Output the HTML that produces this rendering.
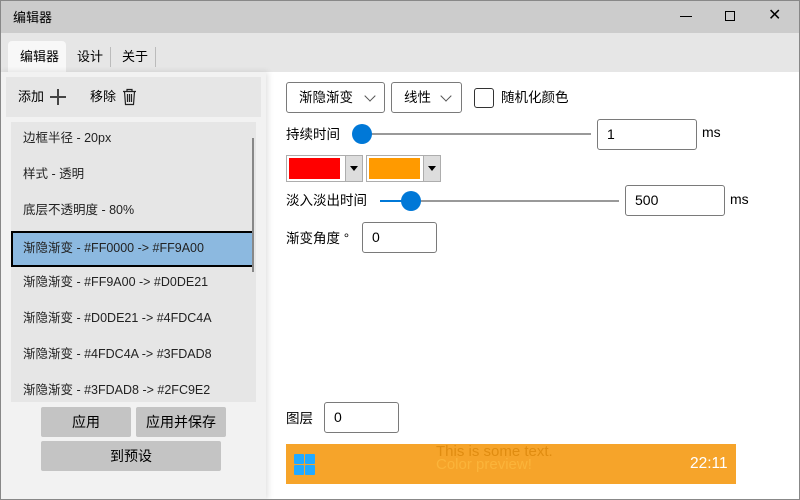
<!DOCTYPE html>
<html><head><meta charset="utf-8"><style>
*{box-sizing:border-box;margin:0;padding:0}
body{width:800px;height:500px;overflow:hidden;position:relative;background:#fff;font-family:"Liberation Sans","Noto Sans CJK SC",sans-serif;font-size:13px;color:#000}
.a{position:absolute}
.tb{border:1px solid #7a7a7a;border-radius:3px;background:#fff;padding-left:9px;font-size:14px;line-height:28px}
.li{position:absolute;left:11px;width:243px;height:36px;padding-left:12px;line-height:36px;font-size:12.5px;color:#222}
.btn{position:absolute;background:#c4c4c4;border-radius:2px;text-align:center;line-height:30px;font-size:14px}
.dd{position:absolute;border:1px solid #7a7a7a;border-radius:3px;background:#fff;top:82px;height:31px;line-height:29px;font-size:13.5px;padding-left:12px}
.chev{position:absolute;top:9px;width:8px;height:8px;border-right:1px solid #555;border-bottom:1px solid #555;transform:rotate(45deg)}
.lab{position:absolute;font-size:13.5px}
.thumb{position:absolute;width:20px;height:20px;border-radius:50%;background:#0078d7}
.track{position:absolute;height:2px;background:#999}
.cp{position:absolute;top:155px;height:27px;border:1px solid #adadad;background:#fff}
.arr{position:absolute;right:0;top:0;width:17px;height:25px;background:#ddd;border-left:1px solid #adadad}
.arr:after{content:"";position:absolute;left:4px;top:10px;border-left:4px solid transparent;border-right:4px solid transparent;border-top:5px solid #000}
</style></head><body>
<div class="a" style="left:0;top:0;width:800px;height:33px;background:#cccccc;border:1px solid #888;border-bottom:none"></div>
<div class="a" style="left:13px;top:7px;font-size:13px">编辑器</div>
<div class="a" style="left:680px;top:16px;width:12px;height:1px;background:#000"></div>
<div class="a" style="left:725px;top:11px;width:10px;height:10px;border:1px solid #000"></div>
<div class="a" style="left:768px;top:7px;font-size:16px;line-height:18px">✕</div>
<div class="a" style="left:0;top:33px;width:800px;height:39px;background:#e6e6e6;border-left:1px solid #888;border-right:1px solid #888"></div>
<div class="a" style="left:8px;top:41px;width:58px;height:31px;background:#f8f8f8;border-radius:4px 4px 0 0"></div>
<div class="a" style="left:20px;top:46px;font-size:13px">编辑器</div>
<div class="a" style="left:77px;top:46px;font-size:13px">设计</div>
<div class="a" style="left:110px;top:47px;width:1px;height:20px;background:#bbb"></div>
<div class="a" style="left:122px;top:46px;font-size:13px">关于</div>
<div class="a" style="left:155px;top:47px;width:1px;height:20px;background:#bbb"></div>
<div class="a" style="left:0;top:72px;width:266px;height:428px;background:#f2f2f2;box-shadow:2px 0 6px rgba(0,0,0,.12);border-left:1px solid #888"></div>
<div class="a" style="left:6px;top:77px;width:255px;height:40px;background:#e6e6e6"></div>
<div class="a" style="left:18px;top:86px;font-size:13px">添加</div>
<div class="a" style="left:50px;top:96px;width:16px;height:1.5px;background:#444"></div>
<div class="a" style="left:57px;top:89px;width:1.5px;height:16px;background:#444"></div>
<div class="a" style="left:90px;top:86px;font-size:13px">移除</div>
<svg class="a" style="left:122px;top:88px" width="15" height="18" viewBox="0 0 15 18"><path d="M1 3.5H14M5 3.5V1.5H10V3.5M2.5 3.5L3.5 16.5H11.5L12.5 3.5M5.5 6V14M7.5 6V14M9.5 6V14" fill="none" stroke="#222" stroke-width="1.2"/></svg>
<div class="a" style="left:11px;top:122px;width:245px;height:280px;background:#e6e6e6"></div>
<div class="li" style="top:120px">边框半径 - 20px</div>
<div class="li" style="top:156px">样式 - 透明</div>
<div class="li" style="top:192px">底层不透明度 - 80%</div>
<div class="li" style="top:231px;height:36px;background:#8cb9e0;border:2px solid #000;padding-left:10px;line-height:30px;left:11px;width:243px">渐隐渐变 - #FF0000 -&gt; #FF9A00</div>
<div class="li" style="top:264px">渐隐渐变 - #FF9A00 -&gt; #D0DE21</div>
<div class="li" style="top:300px">渐隐渐变 - #D0DE21 -&gt; #4FDC4A</div>
<div class="li" style="top:336px">渐隐渐变 - #4FDC4A -&gt; #3FDAD8</div>
<div class="li" style="top:372px;height:30px;overflow:hidden">渐隐渐变 - #3FDAD8 -&gt; #2FC9E2</div>
<div class="a" style="left:252px;top:138px;width:2px;height:134px;background:#888"></div>
<div class="btn" style="left:41px;top:407px;width:90px">应用</div>
<div class="btn" style="left:136px;top:407px;width:90px">应用并保存</div>
<div class="btn" style="left:41px;top:441px;width:180px">到预设</div>
<div class="a" style="left:799px;top:72px;width:1px;height:428px;background:#888"></div>
<div class="a" style="left:0;top:499px;width:800px;height:1px;background:#888"></div>

<div class="dd" style="left:286px;width:99px">渐隐渐变<span class="chev" style="left:79px"></span></div>
<div class="dd" style="left:391px;width:71px">线性<span class="chev" style="left:50px"></span></div>
<div class="a" style="left:474px;top:88px;width:20px;height:20px;border:1px solid #333;border-radius:3px"></div>
<div class="lab" style="left:501px;top:86px">随机化颜色</div>

<div class="lab" style="left:286px;top:123px">持续时间</div>
<div class="track" style="left:362px;top:133px;width:229px"></div>
<div class="thumb" style="left:352px;top:124px"></div>
<div class="tb a" style="left:597px;top:119px;width:100px;height:31px">1</div>
<div class="lab" style="left:702px;top:124px;font-size:14px">ms</div>

<div class="cp" style="left:286px;width:77px"><div class="a" style="left:2px;top:2px;width:51px;height:21px;background:#f00"></div><div class="arr"></div></div>
<div class="cp" style="left:366px;width:75px"><div class="a" style="left:2px;top:2px;width:51px;height:21px;background:#ff9a00"></div><div class="arr"></div></div>

<div class="lab" style="left:286px;top:189px">淡入淡出时间</div>
<div class="track" style="left:380px;top:200px;width:239px"></div>
<div class="a" style="left:380px;top:200px;width:30px;height:2px;background:#0078d7"></div>
<div class="thumb" style="left:401px;top:191px"></div>
<div class="tb a" style="left:625px;top:185px;width:100px;height:31px">500</div>
<div class="lab" style="left:730px;top:191px;font-size:14px">ms</div>

<div class="lab" style="left:286px;top:227px">渐变角度 °</div>
<div class="tb a" style="left:362px;top:222px;width:75px;height:31px">0</div>

<div class="lab" style="left:286px;top:407px">图层</div>
<div class="tb a" style="left:324px;top:402px;width:75px;height:31px">0</div>

<div class="a" style="left:286px;top:444px;width:450px;height:40px;background:#f6a42a"></div>
<div class="a" style="left:294px;top:454px;width:10px;height:10px;background:#22aaff;border-radius:1px"></div>
<div class="a" style="left:305px;top:454px;width:10px;height:10px;background:#22aaff;border-radius:1px"></div>
<div class="a" style="left:294px;top:465px;width:10px;height:10px;background:#22aaff;border-radius:1px"></div>
<div class="a" style="left:305px;top:465px;width:10px;height:10px;background:#22aaff;border-radius:1px"></div>
<div class="a" style="left:436px;top:443px;font-size:15px;color:#e08c10">This is some text.</div>
<div class="a" style="left:436px;top:456px;font-size:15px;color:#fbb43a">Color preview!</div>
<div class="a" style="left:690px;top:455px;font-size:15.5px;color:#fff">22:11</div>
</body></html>
